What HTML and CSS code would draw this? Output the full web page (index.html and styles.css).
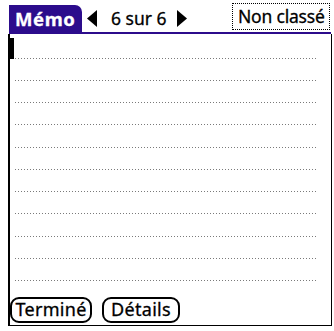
FILE: index.html
```html
<!DOCTYPE html>
<html lang="fr">
<head>
<meta charset="utf-8">
<title>Mémo</title>
<link rel="stylesheet" href="styles.css">
</head>
<body>
<div class="screen">
  <div class="header">
    <div class="tab">Mémo</div>
    <div class="nav">
      <svg class="arrow" width="10" height="17" viewBox="0 0 10 17"><polygon points="10,0 10,17 0,8.5" fill="#000"/></svg>
      <span class="pager">6 sur 6</span>
      <svg class="arrow" width="10" height="17" viewBox="0 0 10 17"><polygon points="0,0 0,17 10,8.5" fill="#000"/></svg>
    </div>
    <div class="category">Non classé</div>
  </div>
  <div class="editor">
    <div class="cursor"></div>
    <div class="lines">
      <div class="line"></div>
      <div class="line"></div>
      <div class="line"></div>
      <div class="line"></div>
      <div class="line"></div>
      <div class="line"></div>
      <div class="line"></div>
      <div class="line"></div>
      <div class="line"></div>
      <div class="line"></div>
      <div class="line"></div>
    </div>
    <div class="buttons">
      <div class="btn btn-done">Terminé</div>
      <div class="btn btn-details">Détails</div>
    </div>
  </div>
</div>
</body>
</html>
```

FILE: styles.css
```css
html, body {
  margin: 0;
  padding: 0;
  background: #fff;
}
.screen {
  width: 334px;
  height: 331px;
  overflow: hidden;
  font-family: "Noto Sans", "Open Sans", sans-serif;
  font-size: 17.5px;
  color: #000;
  -webkit-text-stroke: 0.3px #000;
}
.header {
  display: flex;
  align-items: flex-end;
  margin-left: 9px;
  width: 322px;
  padding-top: 5px;
  height: 27px;
  border-bottom: 2px solid #2c0c8c;
}
.tab {
  box-sizing: border-box;
  width: 73px;
  height: 27px;
  background: #2c0c8c;
  color: #fff;
  -webkit-text-stroke: 0.3px #fff;
  font-weight: bold;
  font-size: 18.5px;
  letter-spacing: 0.6px;
  padding-left: 6px;
  line-height: 27px;
  border-top-right-radius: 7px;
}
.nav {
  display: flex;
  align-items: center;
  height: 27px;
  margin-left: 5px;
}
.pager {
  margin: 0 10px 0 14px;
  line-height: 27px;
}
.category {
  box-sizing: border-box;
  margin-left: auto;
  margin-right: 1px;
  align-self: flex-start;
  margin-top: -2px;
  width: 98px;
  height: 27px;
  border: 1px dotted #000;
  padding-left: 5px;
  line-height: 24px;
  letter-spacing: -0.2px;
}
.editor {
  position: relative;
  box-sizing: border-box;
  margin-left: 8px;
  width: 324px;
  height: 292px;
  border-left: 2px solid #000;
  border-right: 1px solid #000;
  border-bottom: 1px solid #000;
  padding-top: 2.3px;
  display: flex;
  flex-direction: column;
}
.cursor {
  position: absolute;
  left: 0;
  top: 4px;
  width: 4px;
  height: 21px;
  background: #000;
}
.lines {
  padding-left: 5px;
}
.line {
  box-sizing: border-box;
  width: 303px;
  height: 22.27px;
  background-image: repeating-linear-gradient(to right, #7a7a7a 0 1.5px, transparent 1.5px 3px);
  background-size: 100% 1px;
  background-repeat: no-repeat;
  background-position: left bottom;
}
.buttons {
  display: flex;
  gap: 10px;
  margin-top: auto;
  padding-bottom: 2px;
}
.btn {
  box-sizing: border-box;
  height: 26px;
  border: 2px solid #000;
  border-radius: 9px;
  line-height: 21px;
  text-align: center;
  letter-spacing: 0.3px;
  font-size: 18px;
}
.btn-done {
  width: 82px;
}
.btn-details {
  width: 78px;
}
```
